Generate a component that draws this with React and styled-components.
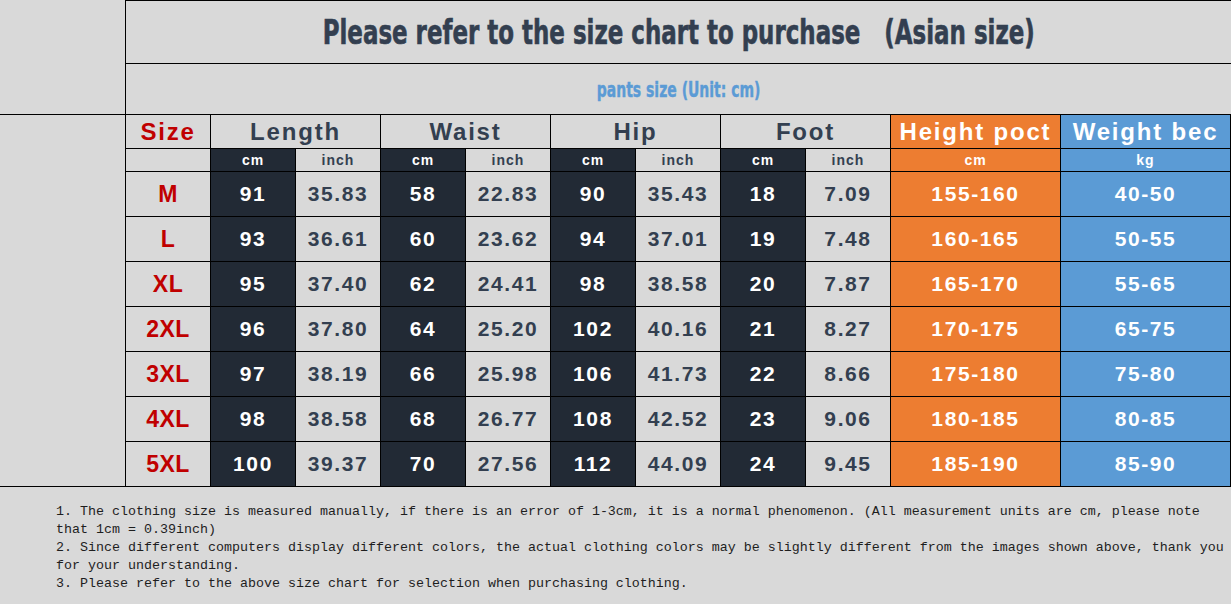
import React from "react";
import styled, { createGlobalStyle } from "styled-components";

const GlobalStyle = createGlobalStyle`
  html, body {
    margin: 0;
    padding: 0;
    background: #d9d9d9;
  }
  body {
    font-family: "Liberation Sans", Arial, sans-serif;
  }
`;

const Page = styled.div`
  width: 1231px;
  height: 604px;
  background: #d9d9d9;
  overflow: hidden;
`;

const Top = styled.div`
  display: flex;
  height: 114px;
`;

const Blank = styled.div`
  width: 125px;
  flex-shrink: 0;
  border-right: 1px solid #000;
`;

const Banner = styled.div`
  flex: 1;
  display: flex;
  flex-direction: column;
  border-top: 1px solid #000;
`;

const TitleRow = styled.div`
  height: 62px;
  border-bottom: 1px solid #000;
  display: flex;
  align-items: center;
  justify-content: center;
`;

// the chart uses a condensed display face; squeeze a condensed bold to match
const Title = styled.h1`
  margin: 0;
  font-family: "DejaVu Sans Condensed", "DejaVu Sans", sans-serif;
  font-weight: 700;
  font-size: 34px;
  color: #333f50;
  white-space: pre;
  transform: scaleX(0.75);
  -webkit-text-stroke: 0.6px #333f50;
`;

const SubRow = styled.div`
  flex: 1;
  display: flex;
  align-items: center;
  justify-content: center;
  padding-top: 2px;
`;

const Subtitle = styled.div`
  font-family: "DejaVu Sans Condensed", "DejaVu Sans", sans-serif;
  font-weight: 700;
  font-size: 21px;
  color: #5b9bd5;
  transform: scaleX(0.74);
  -webkit-text-stroke: 0.4px #5b9bd5;
`;

const Chart = styled.div`
  display: flex;
  border-top: 1px solid #000;
  border-bottom: 1px solid #000;
`;

const Grid = styled.div`
  display: grid;
  grid-template-columns: repeat(9, 84px) 169px 169px;
  grid-template-rows: 33px 22px repeat(7, 44px);
  gap: 1px;
  background: #000;
  border-right: 1px solid #000;
`;

const tones = {
  light: { bg: "#d9d9d9", fg: "#333f50" },
  dark: { bg: "#222a35", fg: "#ffffff" },
  orange: { bg: "#ed7d31", fg: "#ffffff" },
  blue: { bg: "#5b9bd5", fg: "#ffffff" },
  red: { bg: "#d9d9d9", fg: "#c00000" },
};

const Cell = styled.div`
  grid-column: span ${(p) => p.$span || 1};
  display: flex;
  align-items: center;
  justify-content: center;
  background: ${(p) => tones[p.$tone].bg};
  color: ${(p) => tones[p.$tone].fg};
  font-weight: 700;
  white-space: nowrap;
`;

const HeadCell = styled(Cell)`
  font-size: 24px;
  letter-spacing: 1.8px;
  padding-top: 1px;
`;

const UnitCell = styled(Cell)`
  font-size: 14px;
  letter-spacing: 1px;
`;

const DataCell = styled(Cell)`
  font-size: 21px;
  letter-spacing: 1.6px;
`;

const SizeCell = styled(Cell)`
  font-size: 23px;
  letter-spacing: 0.5px;
`;

const Notes = styled.div`
  padding: 16px 0 0 56px;
  width: 1172px;
  font-family: "Liberation Mono", "DejaVu Sans Mono", monospace;
  font-size: 13.33px;
  line-height: 18px;
  color: #1e1e1e;
`;

const Note = styled.p`
  margin: 0;
`;

const groups = ["Length", "Waist", "Hip", "Foot"];

const rows = [
  ["M", "91", "35.83", "58", "22.83", "90", "35.43", "18", "7.09", "155-160", "40-50"],
  ["L", "93", "36.61", "60", "23.62", "94", "37.01", "19", "7.48", "160-165", "50-55"],
  ["XL", "95", "37.40", "62", "24.41", "98", "38.58", "20", "7.87", "165-170", "55-65"],
  ["2XL", "96", "37.80", "64", "25.20", "102", "40.16", "21", "8.27", "170-175", "65-75"],
  ["3XL", "97", "38.19", "66", "25.98", "106", "41.73", "22", "8.66", "175-180", "75-80"],
  ["4XL", "98", "38.58", "68", "26.77", "108", "42.52", "23", "9.06", "180-185", "80-85"],
  ["5XL", "100", "39.37", "70", "27.56", "112", "44.09", "24", "9.45", "185-190", "85-90"],
];

// column index -> tone for the data area
const toneFor = (i) => {
  if (i === 9) return "orange";
  if (i === 10) return "blue";
  return i % 2 === 1 ? "dark" : "light";
};

export default function App() {
  return (
    <Page>
      <GlobalStyle />
      <Top>
        <Blank />
        <Banner>
          <TitleRow>
            <Title>{"Please refer to the size chart to purchase   (Asian size)"}</Title>
          </TitleRow>
          <SubRow>
            <Subtitle>pants size (Unit: cm)</Subtitle>
          </SubRow>
        </Banner>
      </Top>

      <Chart>
        <Blank />
        <Grid>
          <HeadCell $tone="red">Size</HeadCell>
          {groups.map((g) => (
            <HeadCell key={g} $tone="light" $span={2}>
              {g}
            </HeadCell>
          ))}
          <HeadCell $tone="orange">Height poct</HeadCell>
          <HeadCell $tone="blue">Weight bec</HeadCell>

          <UnitCell $tone="light" />
          {groups.map((g) => (
            <React.Fragment key={g}>
              <UnitCell $tone="dark">cm</UnitCell>
              <UnitCell $tone="light">inch</UnitCell>
            </React.Fragment>
          ))}
          <UnitCell $tone="orange">cm</UnitCell>
          <UnitCell $tone="blue">kg</UnitCell>

          {rows.map((r) =>
            r.map((v, i) =>
              i === 0 ? (
                <SizeCell key={r[0] + i} $tone="red">
                  {v}
                </SizeCell>
              ) : (
                <DataCell key={r[0] + i} $tone={toneFor(i)}>
                  {v}
                </DataCell>
              )
            )
          )}
        </Grid>
      </Chart>

      <Notes>
        <Note>
          1. The clothing size is measured manually, if there is an error of 1-3cm, it is a normal phenomenon. (All measurement units are cm, please note that 1cm = 0.39inch)
        </Note>
        <Note>
          2. Since different computers display different colors, the actual clothing colors may be slightly different from the images shown above, thank you for your understanding.
        </Note>
        <Note>3. Please refer to the above size chart for selection when purchasing clothing.</Note>
      </Notes>
    </Page>
  );
}
